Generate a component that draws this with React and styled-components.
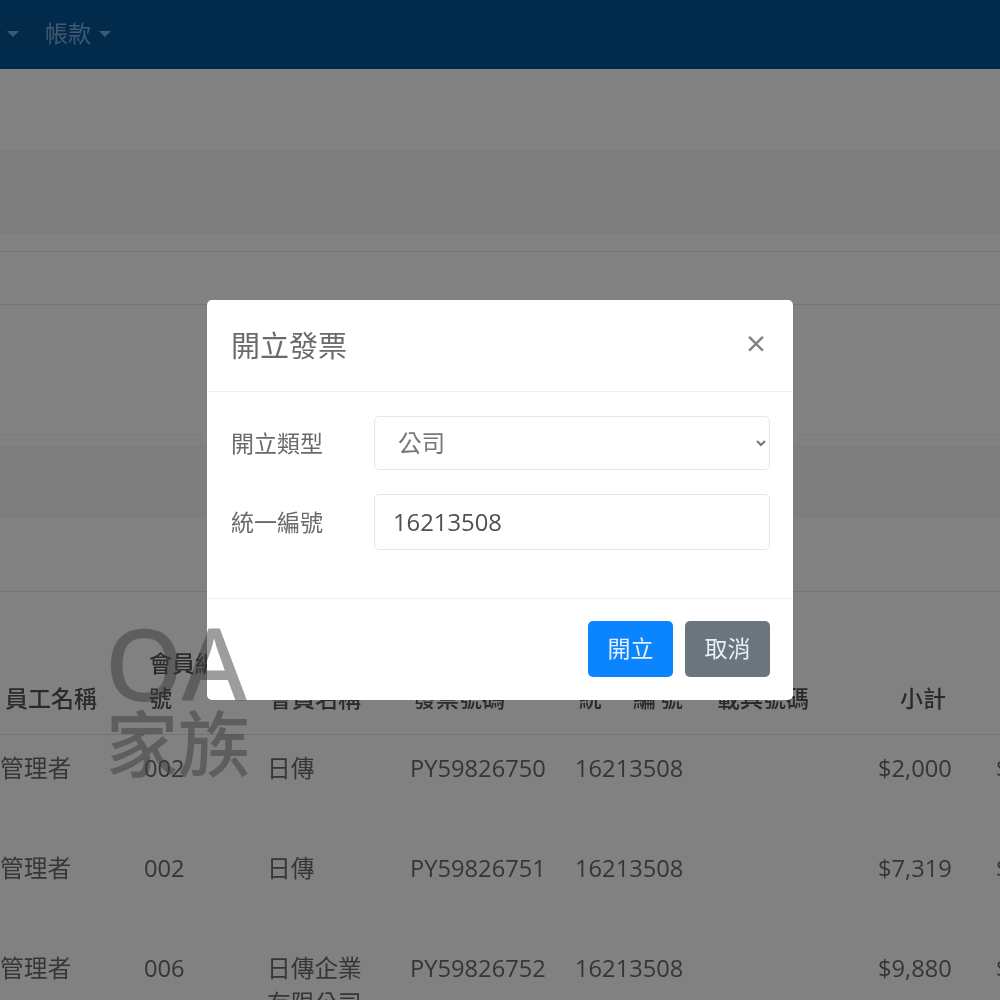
import styled, { createGlobalStyle } from "styled-components";

const GlobalStyle = createGlobalStyle`
  html, body {
    margin: 0;
    padding: 0;
    background: #fff;
  }
  * {
    box-sizing: border-box;
  }
`;

const FONT = `"Open Sans", "Noto Sans CJK TC", sans-serif`;
const COLUMNS = "144px 123px 143px 165px 137px 166px 118px 100px";

const Page = styled.div`
  position: relative;
  width: 1000px;
  height: 1000px;
  overflow: hidden;
  background: #fffdff;
  font-family: ${FONT};
  font-size: 23.7px;
  line-height: 35px;
  color: #6a6a6e;
  filter: blur(0.6px);
`;
const Navbar = styled.nav`
  height: 69px;
  display: flex;
  align-items: center;
  padding: 0 0 2px 7px;
  background: #055493;
  color: #7cb0dc;
  font-size: 23px;
`;
const NavItem = styled.div`
  display: flex;
  align-items: center;
  gap: 8px;
  margin-right: 26px;
`;
const Caret = styled.span`
  width: 0;
  height: 0;
  border-left: 6px solid transparent;
  border-right: 6px solid transparent;
  border-top: 6px solid #7cb0dc;
`;
const Band = styled.div`
  height: ${(props) => props.$height}px;
  background: ${(props) => (props.$dark ? "#faf7fa" : "#fffdff")};
  border-bottom: 1px solid ${(props) => (props.$strong ? "#e6e4e8" : "#f3f1f5")};
`;
const HeaderRow = styled.div`
  display: grid;
  grid-template-columns: ${COLUMNS};
  height: 143px;
  align-items: end;
  padding-bottom: 18px;
  border-bottom: 1px solid #e4e2e6;
  color: #545458;
  font-size: 23px;
  font-weight: 500;
`;
const HeaderCell = styled.div`
  padding-left: ${(props) => props.$pad}px;
  max-width: ${(props) => (props.$narrow ? "80px" : "none")};
  letter-spacing: ${(props) => props.$spread || 0}px;
  white-space: ${(props) => (props.$narrow ? "normal" : "nowrap")};
`;
const Row = styled.div`
  display: grid;
  grid-template-columns: ${COLUMNS};
  height: 100px;
  padding-top: 16px;
`;
const Cell = styled.div`
  max-width: 110px;
`;
const NumberCell = styled.div`
  white-space: nowrap;
`;
const Backdrop = styled.div`
  position: absolute;
  inset: 0;
  display: flex;
  justify-content: center;
  align-items: flex-start;
  padding-top: 300px;
  background: rgba(0, 0, 0, 0.49);
`;
const Modal = styled.div`
  width: 586px;
  background: #fff;
  border-radius: 5px;
  color: #6a6a6c;
`;
const ModalHeader = styled.div`
  height: 92px;
  display: flex;
  align-items: center;
  justify-content: space-between;
  padding: 0 24px;
  border-bottom: 1px solid #efeff1;
`;
const ModalTitle = styled.h5`
  margin: 0;
  font-size: 29px;
  font-weight: 400;
  line-height: 1.5;
`;
const CloseButton = styled.button`
  border: 0;
  padding: 0;
  background: none;
  color: #808083;
  font-family: ${FONT};
  font-size: 35px;
  font-weight: 500;
  line-height: 1;
  margin: -6px 3px 0 0;
`;
const ModalBody = styled.div`
  display: flex;
  flex-direction: column;
  gap: 24px;
  padding: 24px 23px 48px 24px;
  border-bottom: 1px solid #efeff1;
`;
const FormRow = styled.div`
  display: flex;
  align-items: center;
`;
const Label = styled.label`
  width: 143px;
  font-size: 23px;
`;
const Select = styled.select`
  width: 396px;
  height: 54px;
  padding: 0 0 0 19px;
  border: 1px solid #e6e6ea;
  border-radius: 5px;
  background: #fff;
  color: #77777a;
  font-family: ${FONT};
  font-size: 23.6px;
`;
const Input = styled.input`
  width: 396px;
  height: 56px;
  padding: 0 18px;
  border: 1px solid #e6e6ea;
  border-radius: 5px;
  background: #fff;
  color: #505053;
  font-family: ${FONT};
  font-size: 23.8px;
`;
const ModalFooter = styled.div`
  display: flex;
  justify-content: flex-end;
  gap: 12px;
  padding: 22px 23px 23px;
`;
const Button = styled.button`
  width: 85px;
  height: 56px;
  border: 0;
  border-radius: 5px;
  background: ${(props) => (props.$primary ? "#0a84ff" : "#6c757d")};
  color: #e6eef7;
  font-family: ${FONT};
  font-size: 23px;
  padding-bottom: 5px;
`;
const Watermark = styled.div`
  position: absolute;
  left: 105px;
  top: 612px;
  color: rgba(60, 60, 60, 0.5);
  pointer-events: none;
`;
const WatermarkLatin = styled.div`
  font-family: "Noto Sans", sans-serif;
  font-size: 100px;
  font-weight: 500;
  line-height: 100px;
`;
const WatermarkCjk = styled.div`
  margin-top: -14px;
  margin-left: 1px;
  font-family: "Noto Sans CJK TC", sans-serif;
  font-size: 72px;
  font-weight: 500;
  line-height: 84px;
  white-space: nowrap;
`;

const BANDS = [
  { height: 82 },
  { height: 82, dark: true },
  { height: 19, strong: true },
  { height: 53, strong: true },
  { height: 130 },
  { height: 12 },
  { height: 70, dark: true },
  { height: 75, strong: true },
];

const HEADERS = [
  { label: "員工名稱", pad: 5 },
  { label: "會員編號", pad: 5, narrow: true },
  { label: "會員名稱", pad: 2 },
  { label: "發票號碼", pad: 3 },
  { label: "統一編號", pad: 4, spread: 4 },
  { label: "載具號碼", pad: 5 },
  { label: "小計", pad: 22 },
];

const ROWS = [
  { staff: "管理者", id: "002", name: "日傳", invoice: "PY59826750", tax: "16213508", amount: "$2,000" },
  { staff: "管理者", id: "002", name: "日傳", invoice: "PY59826751", tax: "16213508", amount: "$7,319" },
  { staff: "管理者", id: "006", name: "日傳企業有限公司", invoice: "PY59826752", tax: "16213508", amount: "$9,880" },
];

function App() {
  return (
    <>
      <GlobalStyle />
      <Page>
        <Navbar>
          <NavItem>
            <Caret />
          </NavItem>
          <NavItem>
            帳款
            <Caret />
          </NavItem>
        </Navbar>
        {BANDS.map((band, index) => (
          <Band key={index} $height={band.height} $dark={band.dark} $strong={band.strong} />
        ))}
        <HeaderRow>
          {HEADERS.map((header) => (
            <HeaderCell
              key={header.label}
              $pad={header.pad}
              $narrow={header.narrow}
              $spread={header.spread}
            >
              {header.label}
            </HeaderCell>
          ))}
        </HeaderRow>
        {ROWS.map((row) => (
          <Row key={row.invoice}>
            <Cell>{row.staff}</Cell>
            <Cell>{row.id}</Cell>
            <Cell>{row.name}</Cell>
            <NumberCell>{row.invoice}</NumberCell>
            <NumberCell>{row.tax}</NumberCell>
            <NumberCell />
            <NumberCell>{row.amount}</NumberCell>
            <NumberCell>{row.amount}</NumberCell>
          </Row>
        ))}
        <Backdrop>
          <Modal>
            <ModalHeader>
              <ModalTitle>開立發票</ModalTitle>
              <CloseButton>×</CloseButton>
            </ModalHeader>
            <ModalBody>
              <FormRow>
                <Label>開立類型</Label>
                <Select defaultValue="company">
                  <option value="company">公司</option>
                  <option value="personal">個人</option>
                </Select>
              </FormRow>
              <FormRow>
                <Label>統一編號</Label>
                <Input defaultValue="16213508" />
              </FormRow>
            </ModalBody>
            <ModalFooter>
              <Button $primary>開立</Button>
              <Button>取消</Button>
            </ModalFooter>
          </Modal>
        </Backdrop>
        <Watermark>
          <WatermarkLatin>OA</WatermarkLatin>
          <WatermarkCjk>家族</WatermarkCjk>
        </Watermark>
      </Page>
    </>
  );
}

export default App;
